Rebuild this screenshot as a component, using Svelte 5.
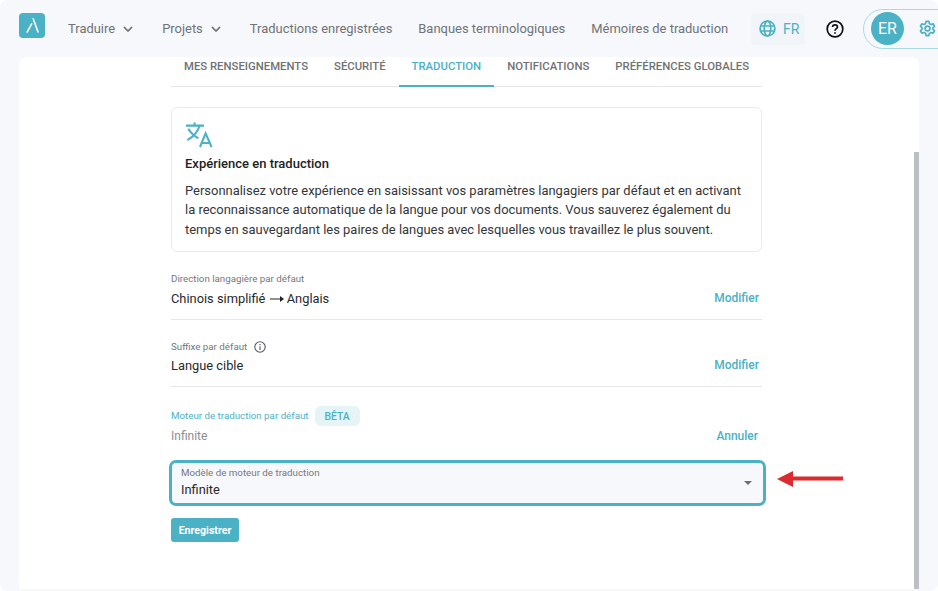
<script>
const navItems = [
  { label: "Traduire", caret: true },
  { label: "Projets", caret: true },
  { label: "Traductions enregistrées" },
  { label: "Banques terminologiques" },
  { label: "Mémoires de traduction" },
];
const tabs = ["Mes renseignements", "Sécurité", "Traduction", "Notifications", "Préférences globales"];
</script>

<div class="page">
  <header class="topbar">
    <div class="logo">
      <svg width="26" height="25" viewBox="0 0 26 25" fill="none" stroke="#fff" stroke-width="1.6">
        <path d="M7.8 19.6 L13 10.4 M14 5.2 L19.2 19.6" />
      </svg>
    </div>
    <nav class="nav">
      {#each navItems as item}
        <span class="nav-item" class:has-caret={item.caret}>
          {item.label}
          {#if item.caret}
            <svg width="10" height="6" viewBox="0 0 10 6" fill="none" stroke="#6f7378" stroke-width="1.7">
              <path d="M1 1 L5 5 L9 1" />
            </svg>
          {/if}
        </span>
      {/each}
    </nav>
    <div class="lang">
      <svg width="17" height="17" viewBox="0 0 24 24" fill="none" stroke="#4bb1c4" stroke-width="2.4">
        <circle cx="12" cy="12" r="10.5" />
        <ellipse cx="12" cy="12" rx="4.6" ry="10.5" />
        <path d="M2 8.5 H22 M2 15.5 H22" />
      </svg>
      <span>FR</span>
    </div>
    <svg class="help" width="18" height="18" viewBox="0 0 24 24" fill="none" stroke="#111" stroke-width="2.3">
      <circle cx="12" cy="12" r="10.4" />
      <path d="M8.8 9.4 C8.8 7.5 10.2 6.4 12 6.4 C13.9 6.4 15.3 7.6 15.3 9.2 C15.3 11.4 12 11.6 12 14.4" />
      <path d="M12 16.2 V18.4" />
    </svg>
    <div class="user">
      <div class="avatar">ER</div>
      <svg width="17" height="17" viewBox="0 0 24 24" fill="none" stroke="#4bb1c4" stroke-width="2.4" stroke-linejoin="round">
        <path d="M10 2 H14 L14.7 5.1 L16.9 6.4 L20 5.4 L22 8.8 L19.6 11 V13 L22 15.2 L20 18.6 L16.9 17.6 L14.7 18.9 L14 22 H10 L9.3 18.9 L7.1 17.6 L4 18.6 L2 15.2 L4.4 13 V11 L2 8.8 L4 5.4 L7.1 6.4 L9.3 5.1 Z" />
        <circle cx="12" cy="12" r="3.4" />
      </svg>
    </div>
  </header>

  <main class="card">
    <div class="scrollbar"></div>
    <div class="column">
      <div class="tabs">
        {#each tabs as tab}
          <div class="tab" class:active={tab === "Traduction"}>{tab}</div>
        {/each}
      </div>

      <section class="intro">
        <svg width="28" height="26" viewBox="0 0 28 26" fill="none" stroke="#4bb1c4" stroke-width="2.1">
          <path d="M1 3.6 H19 M9.6 0.4 V3.6" />
          <path d="M14.6 3.6 C13 9.6 8 15 2.4 18.2" />
          <path d="M3.4 6.8 C6 11.4 10 14.6 13.4 16.2" />
          <path d="M15 25 L20.6 11.4 L26.6 25 M16.8 21 H24.8" />
        </svg>
        <h2>Expérience en traduction</h2>
        <p>Personnalisez votre expérience en saisissant vos paramètres langagiers par défaut et en activant la reconnaissance automatique de la langue pour vos documents. Vous sauverez également du temps en sauvegardant les paires de langues avec lesquelles vous travaillez le plus souvent.</p>
      </section>

      <div class="setting">
        <div class="setting-text">
          <div class="small">Direction langagière par défaut</div>
          <div class="val">Chinois simplifié
            <svg class="arrow-inline" width="14" height="8" viewBox="0 0 14 8"><path d="M0 3.4 H10 V1 L14 4 L10 7 V4.6 H0 Z" fill="#222" /></svg>
            Anglais</div>
        </div>
        <span class="link">Modifier</span>
      </div>

      <div class="setting second">
        <div class="setting-text">
          <div class="small">Suffixe par défaut
            <svg class="info" width="12" height="12" viewBox="0 0 12 12" fill="none" stroke="#55595e" stroke-width="1.1">
              <circle cx="6" cy="6" r="5.2" />
              <path d="M6 5.2 V9 M6 3 V4.2" />
            </svg>
          </div>
          <div class="val">Langue cible</div>
        </div>
        <span class="link">Modifier</span>
      </div>

      <div class="engine">
        <div class="engine-head">
          <span class="small teal">Moteur de traduction par défaut</span>
          <span class="beta">BÊTA</span>
        </div>
        <div class="engine-row">
          <span class="muted">Infinite</span>
          <span class="link cancel">Annuler</span>
        </div>
      </div>

      <div class="select-wrap">
        <div class="select">
          <div class="select-label">Modèle de moteur de traduction</div>
          <div class="select-value">Infinite</div>
          <span class="caret"></span>
        </div>
        <svg class="callout" width="66" height="16" viewBox="0 0 66 16">
          <path d="M0 8 L16 0 V5.5 H66 V9.5 H16 V16 Z" fill="#dc2b2f" />
        </svg>
      </div>

      <button class="save">Enregistrer</button>
    </div>
  </main>
</div>

<style>
  :global(body) { margin: 0; background: #fff; }
  .page {
    width: 938px; height: 591px; overflow: hidden; box-sizing: border-box;
    background: #f7f8fc; border-radius: 8px;
    font-family: Roboto, "Liberation Sans", sans-serif; color: #222;
    display: flex; flex-direction: column;
  }
  .topbar {
    height: 57px; flex: none; display: flex; align-items: center;
    padding-left: 19px; white-space: nowrap;
  }
  .logo {
    width: 26px; height: 25px; border-radius: 4px; background: #4bb1c4;
    margin-right: 23px; margin-bottom: 6px; flex: none;
  }
  .logo svg { display: block; }
  .nav { display: flex; gap: 26px; width: 680px; flex: none; }
  .nav-item {
    font-size: 12.95px; color: #6f7378; display: flex; align-items: center; gap: 8px;
  }
  .nav-item.has-caret { margin-right: 3px; }
  .lang {
    width: 54px; height: 32px; box-sizing: border-box; background: #f1f5f9; border-radius: 4px;
    display: flex; align-items: center; gap: 7px; padding-left: 8px; flex: none;
    color: #4bb1c4; font-size: 14px; margin-right: 21px; margin-left: 3px;
  }
  .help { margin-right: 19px; flex: none; }
  .user {
    flex: none; width: 100px; height: 40px; box-sizing: border-box;
    border: 1px solid #a9d9e2; border-radius: 20px;
    display: flex; align-items: center; gap: 15px; padding-left: 7px;
  }
  .avatar {
    width: 33px; height: 33px; border-radius: 50%; background: #4bb1c4; color: #fff;
    font-size: 16px; display: flex; align-items: center; justify-content: center; flex: none;
  }

  .card {
    position: relative; flex: 1; margin: 0 19.5px 2px 19px;
    background: #fff; border-radius: 8px 8px 0 0;
    padding-left: 152px;
  }
  .scrollbar {
    position: absolute; right: 0; top: 95px; bottom: 0; width: 4.5px; background: #bcc0c4;
  }
  .column { width: 591px; }

  .tabs { display: flex; height: 29px; border-bottom: 1px solid #e6e7ea; }
  .tab {
    font-size: 11.33px; font-weight: 500; text-transform: uppercase; color: #6f7276; white-space: nowrap;
    padding: 3px 13px 0; box-sizing: border-box; height: 30px; line-height: 13px;
  }
  .tab.active { color: #4bb1c4; border-bottom: 2px solid #4bb1c4; }

  .intro {
    margin-top: 20px; height: 145px; box-sizing: border-box;
    border: 1px solid #e9eaec; border-radius: 6px; padding: 14px 13px 0;
  }
  .intro svg { display: block; }
  .intro h2 { margin: 8px 0 0; font-size: 13px; font-weight: 500; line-height: 15px; color: #222; }
  .intro p { margin: 10px 0 0; font-size: 12.95px; line-height: 19.4px; color: #33363a; }

  .setting {
    display: flex; justify-content: space-between; align-items: flex-end;
    border-bottom: 1px solid #e6e7ea; padding-bottom: 12px; height: 54px; box-sizing: border-box;
    margin-top: 14px;
  }
  .setting.second { margin-top: 13px; }
  .second .small { margin-bottom: -1px; }
  .small { font-size: 9.75px; color: #74777c; line-height: 12px; }
  .small.teal { color: #4bb1c4; }
  .info { vertical-align: -3px; margin-left: 4px; }
  .val { font-size: 12.85px; color: #26282b; margin-top: 6px; line-height: 16px; }
  .arrow-inline { vertical-align: 0; margin: 0 0 0 1px; }
  .link { font-size: 12px; font-weight: 500; color: #4bb1c4; margin: 0 3px 1px 0; line-height: 16px; }
  .link.cancel { margin: 0 4px 0 0; }

  .engine { margin-top: 19px; }
  .engine-head { display: flex; align-items: center; gap: 6px; height: 20px; }
  .beta {
    background: #e5f4f7; color: #4bb1c4; font-size: 10.4px; font-weight: 500;
    border-radius: 6px; width: 45px; height: 20px; display: flex; align-items: center; justify-content: center;
  }
  .engine-row { display: flex; justify-content: space-between; align-items: center; margin-top: 2px; height: 16px; }
  .muted { font-size: 12px; color: #8b8e92; }

  .select-wrap { position: relative; margin-top: 16px; }
  .select {
    position: relative; height: 46px; width: 597px; box-sizing: border-box; margin-left: -2px;
    border: 3px solid #4bb1c4; border-radius: 7px; background: #f7f8fc; padding: 4px 9px 0;
  }
  .select-label { font-size: 9.75px; color: #74777c; line-height: 12px; }
  .select-value { font-size: 12.8px; color: #26282b; line-height: 16px; margin-top: 3px; }
  .caret {
    position: absolute; right: 11px; top: 18px; width: 0; height: 0;
    border-left: 4px solid transparent; border-right: 4px solid transparent; border-top: 4px solid #6b6e72;
  }
  .callout { position: absolute; left: 606px; top: 11px; }

  .save {
    display: block; margin-top: 12px; height: 24px; width: 68px; padding: 0; border: 0;
    background: #4bb1c4; color: #fff; border-radius: 3px;
    font-family: inherit; font-size: 10.6px; font-weight: 700;
  }
</style>
